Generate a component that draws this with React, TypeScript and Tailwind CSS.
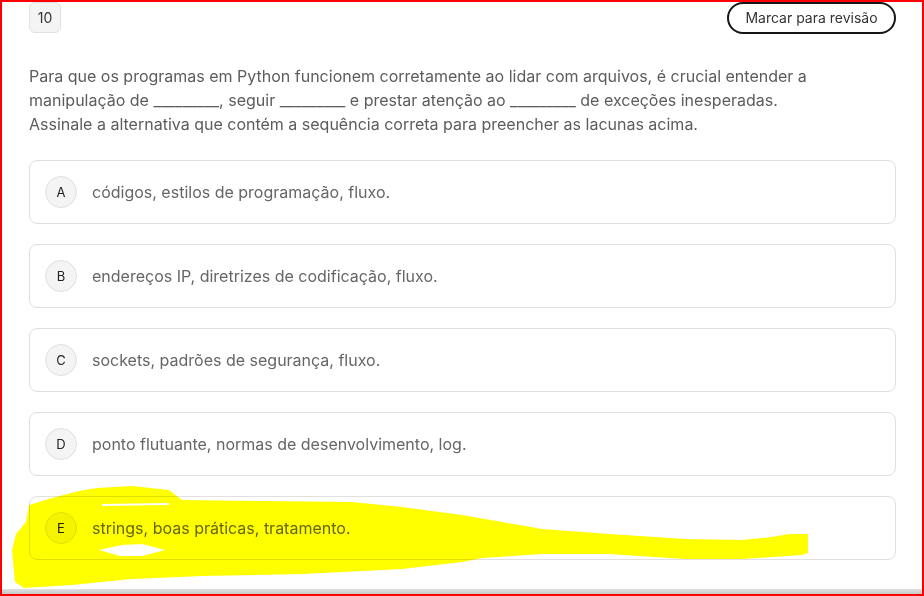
const options = [
  { letter: "A", text: "códigos, estilos de programação, fluxo." },
  { letter: "B", text: "endereços IP, diretrizes de codificação, fluxo." },
  { letter: "C", text: "sockets, padrões de segurança, fluxo." },
  { letter: "D", text: "ponto flutuante, normas de desenvolvimento, log." },
  { letter: "E", text: "strings, boas práticas, tratamento." },
];

// freehand marker stroke drawn over the last answer
const Highlight = () => (
  <svg
    className="pointer-events-none absolute left-0 top-0 mix-blend-multiply"
    width={924}
    height={596}
    viewBox="0 0 924 596"
  >
    <path
      fillRule="evenodd"
      fill="#ffff00"
      d="M27 503 L50 496 L77 489 L95 486 L130 484 L167 488 L180 498 L260 499 L350 500 L400 505 L460 513 L500 520 L540 527 L607 532 L683 537 L740 538 L770 535 L787 532 L806 532 L806 551 L800 553 L740 557 L683 557 L607 552 L540 552 L480 556 L460 560 L400 567 L300 572 L200 574 L130 577 L70 583 L22 586 L13 580 L10 548 L14 532 L24 520 Z
         M97 548 L120 543 L140 542 L163 548 L140 554 L118 554 Z
         M100 502 L167 501 L167 503 L100 504 Z"
    />
  </svg>
);

export default function App() {
  return (
    <div className="relative flex h-[596px] w-[924px] flex-col overflow-hidden border-2 border-[#ff0000] bg-white font-['Inter','Noto_Sans',sans-serif]">
      <div className="flex-1 bg-white pl-[27px] pr-[26px]">
        <div className="flex items-start justify-between">
          <div className="flex h-[31px] w-[32px] items-center justify-center rounded-md border border-[#e2e2e2] bg-[#f4f4f4] text-sm text-[#333]">
            10
          </div>
          <button className="flex h-[32px] w-[169px] items-center justify-center rounded-full border-2 border-[#161616] bg-white text-sm text-[#333]">
            Marcar para revisão
          </button>
        </div>

        <p className="mt-[30px] text-base leading-6 text-[#5c5c5c]">
          Para que os programas em Python funcionem corretamente ao lidar com arquivos, é crucial entender a
          <br />
          manipulação de _________, seguir _________ e prestar atenção ao _________ de exceções inesperadas.
          <br />
          Assinale a alternativa que contém a sequência correta para preencher as lacunas acima.
        </p>

        <div className="mt-6 flex flex-col gap-5">
          {options.map((o) => (
            <div
              key={o.letter}
              className="flex h-16 items-center gap-[15px] rounded-lg border border-[#e0e0e0] bg-white pl-[15px]"
            >
              <span className="flex h-8 w-8 items-center justify-center rounded-full border border-[#e0e0e0] bg-[#f4f4f4] pt-px text-[13px] text-[#222]">
                {o.letter}
              </span>
              <span className="text-base text-[#666]">{o.text}</span>
            </div>
          ))}
        </div>
      </div>
      <div className="h-[5px] bg-gradient-to-b from-[#e2e2e2] to-[#c6c6c6]" />
      <Highlight />
    </div>
  );
}
